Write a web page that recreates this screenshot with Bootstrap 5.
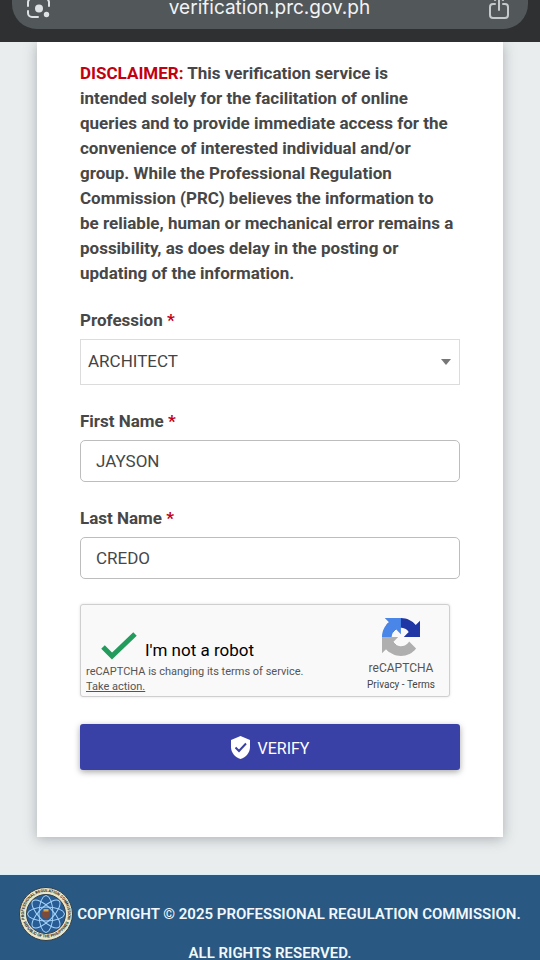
<!DOCTYPE html>
<html lang="en">
<head>
<meta charset="utf-8">
<meta name="viewport" content="width=device-width, initial-scale=1">
<title>PRC Verification</title>
<link rel="stylesheet" href="https://cdn.jsdelivr.net/npm/bootstrap@5.3.0/dist/css/bootstrap.min.css">
<style>
  body { font-family: Roboto, "Liberation Sans", sans-serif; font-size: 17px; color: #474747; background: #e9edee; }
  .browser-bar { background: #2f3032; padding: 0 12px 13px; position: relative; z-index: 1; }
  .address-pill { background: #52575a; border-radius: 0 0 25px 25px; height: 29px; padding: 0 18px 0 15px; }
  .address-text { font-family: Inter, "Liberation Sans", sans-serif; font-size: 19px; line-height: 16px; color: #f1f3f4; }
  .page-body { padding: 0 37px 37px; }
  .form-panel { background: #fff; padding: 19px 43px 67px; box-shadow: 0 2px 12px rgba(60, 66, 72, .36); }
  .disclaimer { line-height: 25px; margin-bottom: 23px; padding-right: 4px; font-weight: 700; }
  .req { color: #c00020; }
  .disclaimer .req { color: #c20010; }
  .field { margin-bottom: 25px; }
  .field-label { display: block; font-weight: 700; line-height: 22px; margin-bottom: 8px; }
  .field .form-select { height: 46px; border: 1px solid #dcdcdc; border-radius: 0; padding: 0 28px 0 7px; font-size: 17px; color: #444;
    background-image: url("data:image/svg+xml,%3Csvg xmlns='http://www.w3.org/2000/svg' viewBox='0 0 10 6'%3E%3Cpath d='M0 0h10L5 6z' fill='%23777'/%3E%3C/svg%3E");
    background-size: 10px 6px; background-position: right 8px center; }
  .field .form-control { height: 42px; border: 1px solid #bdbdbd; border-radius: 5px; padding: 0 15px; font-size: 17px; color: #474747; }
  .captcha { max-width: 370px; height: 93px; background: #f9f9f9; border: 1px solid #cfcfcf; border-radius: 3px; box-shadow: 0 0 3px rgba(0, 0, 0, .12); padding: 0 14px 2px 5px; margin-bottom: 27px; }
  .captcha-check { appearance: none; width: 36px; height: 28px; margin: 0 8px 0 15px; }
  .captcha-check:checked { background: url("data:image/svg+xml,%3Csvg xmlns='http://www.w3.org/2000/svg' viewBox='0 0 36 28'%3E%3Cpath d='M2 15l9 9L34 2' fill='none' stroke='%23229b5c' stroke-width='5'/%3E%3C/svg%3E") center / contain no-repeat; }
  .captcha-label { font-size: 17px; line-height: 20px; color: #000; }
  .captcha-note { font-size: 11px; line-height: 15px; color: #555; }
  .captcha-note a, .captcha-links a { color: inherit; }
  .captcha-brand { font-size: 12px; line-height: 16px; color: #555; }
  .captcha-links { font-size: 10px; line-height: 18px; color: #444; }
  .verify-btn { height: 46px; background: #3a41a6; border: 0; border-radius: 3px; color: #fff; font-size: 16px; box-shadow: 0 2px 6px rgba(0, 0, 0, .35); }
  .verify-btn:hover { background: #30378f; color: #fff; }
  .site-footer { background: #295983; border-top: 1px solid #d9ecfa; color: #f2f8fc; font-size: 15px; font-weight: 600; padding-top: 12px; }
  .footer-line { line-height: 17px; }
</style>
<script src="https://cdn.jsdelivr.net/npm/bootstrap@5.3.0/dist/js/bootstrap.bundle.min.js"></script>
</head>
<body>
<header class="browser-bar overflow-hidden">
  <div class="address-pill d-flex justify-content-between align-items-start">
    <svg width="24" height="19" viewBox="0 0 24 19" fill="none" stroke="#dfe2e4" stroke-width="2" stroke-linecap="round" aria-hidden="true">
      <path d="M1 6V2a5 5 0 0 1 4-4M17-2a5 5 0 0 1 5 4v4M1 11v2a4 4 0 0 0 4 4h6"/>
      <circle cx="12" cy="8.500" r="4" fill="#dfe2e4" stroke="none"/><circle cx="19.500" cy="14.500" r="2.700" fill="#dfe2e4" stroke="none"/>
    </svg>
    <div class="address-text">verification.prc.gov.ph</div>
    <svg width="22" height="20" viewBox="0 0 22 20" fill="none" stroke="#c5c9cb" stroke-width="2" stroke-linecap="round" aria-hidden="true">
      <path d="M7 4H5a3 3 0 0 0-3 3v8a3 3 0 0 0 3 3h12a3 3 0 0 0 3-3V7a3 3 0 0 0-3-3h-2M11 10V-4M7 0l4-4 4 4"/>
    </svg>
  </div>
</header>

<main class="page-body">
  <form class="form-panel">
    <p class="disclaimer"><span class="req">DISCLAIMER:</span> This verification service is intended solely for the facilitation of online queries and to provide immediate access for the convenience of interested individual and/or group. While the Professional Regulation Commission (PRC) believes the information to be reliable, human or mechanical error remains a possibility, as does delay in the posting or updating of the information.</p>

    <div class="field">
      <label class="field-label" for="profession">Profession <span class="req">*</span></label>
      <select class="form-select" id="profession"><option>ARCHITECT</option></select>
    </div>
    <div class="field">
      <label class="field-label" for="first-name">First Name <span class="req">*</span></label>
      <input class="form-control" id="first-name" type="text" value="JAYSON">
    </div>
    <div class="field">
      <label class="field-label" for="last-name">Last Name <span class="req">*</span></label>
      <input class="form-control" id="last-name" type="text" value="CREDO">
    </div>

    <div class="captcha d-flex justify-content-between">
      <div class="d-flex flex-column justify-content-end">
        <div class="d-flex align-items-center">
          <input class="captcha-check" type="checkbox" id="robot" checked>
          <label class="captcha-label pt-2" for="robot">I'm not a robot</label>
        </div>
        <div class="captcha-note pt-1">reCAPTCHA is changing its terms of service.<br><a href="#">Take action.</a></div>
      </div>
      <div class="d-flex flex-column align-items-center justify-content-end">
        <svg class="mb-1" width="38" height="38" viewBox="0 0 64 64" aria-hidden="true">
          <path fill="#1f36a5" d="M64 31.955l-.033-1.370V4.687l-7.160 7.160C50.948 4.674 42.033.093 32.050.093c-10.400 0-19.622 4.960-25.458 12.640l11.736 11.860a15.550 15.550 0 0 1 4.754-5.334c2.050-1.600 4.952-2.906 8.968-2.906.485 0 .860.057 1.135.163 4.976.393 9.288 3.140 11.828 7.124l-8.307 8.307z"/>
          <path fill="#4a86e8" d="M31.862.094l-1.370.033H4.594l7.160 7.160C4.580 13.147 0 22.060 0 32.046c0 10.400 4.960 19.622 12.640 25.458L24.500 45.768a15.550 15.550 0 0 1-5.334-4.754c-1.600-2.050-2.906-4.952-2.906-8.968 0-.485.057-.860.163-1.135.393-4.976 3.140-9.288 7.124-11.828l8.307 8.307z"/>
          <path fill="#afafaf" d="M0 32.045l.033 1.370v25.898l7.160-7.160c5.860 7.173 14.774 11.754 24.760 11.754 10.400 0 19.622-4.960 25.458-12.640l-11.736-11.860a15.550 15.550 0 0 1-4.754 5.334c-2.050 1.600-4.952 2.906-8.968 2.906-.485 0-.860-.057-1.135-.163-4.976-.393-9.288-3.140-11.828-7.124l8.307-8.307z"/>
        </svg>
        <div class="captcha-brand">reCAPTCHA</div>
        <div class="captcha-links"><a class="text-decoration-none" href="#">Privacy</a> - <a class="text-decoration-none" href="#">Terms</a></div>
      </div>
    </div>

    <button class="btn verify-btn w-100 d-flex align-items-center justify-content-center gap-2" type="button">
      <svg width="19" height="23" viewBox="0 0 19 23" aria-hidden="true">
        <path fill="#fff" d="M9.500 0L19 4v7c0 5.500-4 10.500-9.500 12C4 21.500 0 16.500 0 11V4z"/>
        <path fill="none" stroke="#3a41a6" stroke-width="2" d="M4.500 11.500l3.500 3.500 7-7.500"/>
      </svg>
      <span class="pt-1">VERIFY</span>
    </button>
  </form>
</main>

<footer class="site-footer text-center">
  <div class="d-flex align-items-center justify-content-center gap-1">
    <svg class="flex-shrink-0" width="54" height="54" viewBox="0 0 108 108" role="img" aria-label="Professional Regulation Commission seal">
      <circle cx="54" cy="54" r="53" fill="#e9e5c8" stroke="#313d46" stroke-width="2"/>
      <circle cx="54" cy="54" r="39" fill="#285c94" stroke="#313d46" stroke-width="2"/>
      <g fill="none" stroke="#a5d4fb" stroke-width="2">
        <ellipse cx="54" cy="54" rx="37" ry="14"/>
        <ellipse cx="54" cy="54" rx="37" ry="14" transform="rotate(45 54 54)"/>
        <ellipse cx="54" cy="54" rx="37" ry="14" transform="rotate(90 54 54)"/>
        <ellipse cx="54" cy="54" rx="37" ry="14" transform="rotate(135 54 54)"/>
      </g>
      <path d="M46 50l4-6h8l4 6-1 10-7 4-7-4z" fill="#7d4938"/><path d="M49 44h10v5H49z" fill="#d1a64c"/>
      <path id="arc-top" d="M12 67A44 44 0 1 1 96 67" fill="none"/>
      <path id="arc-low" d="M8 69A49 49 0 0 0 100 69" fill="none"/>
      <g font-family="Roboto, sans-serif" font-weight="700" fill="#262b2d" text-anchor="middle">
        <text font-size="8"><textPath href="#arc-top" startOffset="50%">PROFESSIONAL REGULATION COMMISSION</textPath></text>
        <text font-size="8"><textPath href="#arc-low" startOffset="50%">REPUBLIC OF THE PHILIPPINES</textPath></text>
      </g>
    </svg>
    <span class="text-nowrap">COPYRIGHT © 2025 PROFESSIONAL REGULATION COMMISSION.</span>
  </div>
  <div class="footer-line pt-1">ALL RIGHTS RESERVED.</div>
</footer>
</body>
</html>
